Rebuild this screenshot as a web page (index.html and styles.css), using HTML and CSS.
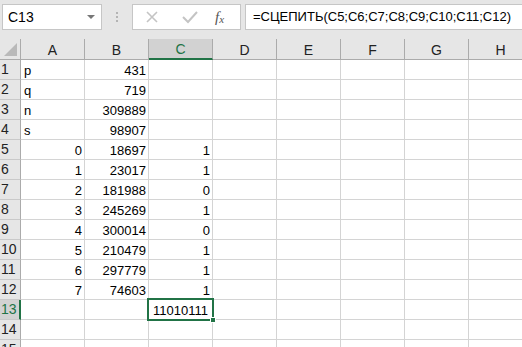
FILE: index.html
```html
<!DOCTYPE html>
<html lang="ru">

<head>
    <meta charset="UTF-8">
    <title>Книга1</title>
    <link rel="stylesheet" href="styles.css">
</head>

<body>
    <div class="formula-bar">
        <div class="name-box">
            <span class="name-text">C13</span>
            <span class="name-arrow"></span>
        </div>
        <div class="grip">
            <i></i><i></i><i></i>
        </div>
        <div class="fx-buttons">
            <svg class="btn-cancel" width="14" height="14" viewBox="0 0 14 14">
                <path d="M2 2 L12 12 M12 2 L2 12" stroke="#c4c4c4" stroke-width="1.6" fill="none" />
            </svg>
            <svg class="btn-enter" width="18" height="14" viewBox="0 0 18 14">
                <path d="M2 7 L7 12 L16 2" stroke="#c4c4c4" stroke-width="2" fill="none" />
            </svg>
            <span class="btn-fx">f<sub>x</sub></span>
        </div>
        <div class="formula-box">=СЦЕПИТЬ(C5;C6;C7;C8;C9;C10;C11;C12)</div>
    </div>

    <div class="sheet">
        <div class="hd corner"><span class="corner-tri"></span></div>
        <div class="hd col">A</div>
        <div class="hd col">B</div>
        <div class="hd col active-col">C</div>
        <div class="hd col">D</div>
        <div class="hd col">E</div>
        <div class="hd col">F</div>
        <div class="hd col">G</div>
        <div class="hd col">H</div>

        <div class="hd row">1</div>
        <div class="c">p</div><div class="c num">431</div><div class="c"></div><div class="c"></div><div class="c"></div><div class="c"></div><div class="c"></div><div class="c"></div>

        <div class="hd row">2</div>
        <div class="c">q</div><div class="c num">719</div><div class="c"></div><div class="c"></div><div class="c"></div><div class="c"></div><div class="c"></div><div class="c"></div>

        <div class="hd row">3</div>
        <div class="c">n</div><div class="c num">309889</div><div class="c"></div><div class="c"></div><div class="c"></div><div class="c"></div><div class="c"></div><div class="c"></div>

        <div class="hd row">4</div>
        <div class="c">s</div><div class="c num">98907</div><div class="c"></div><div class="c"></div><div class="c"></div><div class="c"></div><div class="c"></div><div class="c"></div>

        <div class="hd row">5</div>
        <div class="c num">0</div><div class="c num">18697</div><div class="c num">1</div><div class="c"></div><div class="c"></div><div class="c"></div><div class="c"></div><div class="c"></div>

        <div class="hd row">6</div>
        <div class="c num">1</div><div class="c num">23017</div><div class="c num">1</div><div class="c"></div><div class="c"></div><div class="c"></div><div class="c"></div><div class="c"></div>

        <div class="hd row">7</div>
        <div class="c num">2</div><div class="c num">181988</div><div class="c num">0</div><div class="c"></div><div class="c"></div><div class="c"></div><div class="c"></div><div class="c"></div>

        <div class="hd row">8</div>
        <div class="c num">3</div><div class="c num">245269</div><div class="c num">1</div><div class="c"></div><div class="c"></div><div class="c"></div><div class="c"></div><div class="c"></div>

        <div class="hd row">9</div>
        <div class="c num">4</div><div class="c num">300014</div><div class="c num">0</div><div class="c"></div><div class="c"></div><div class="c"></div><div class="c"></div><div class="c"></div>

        <div class="hd row">10</div>
        <div class="c num">5</div><div class="c num">210479</div><div class="c num">1</div><div class="c"></div><div class="c"></div><div class="c"></div><div class="c"></div><div class="c"></div>

        <div class="hd row">11</div>
        <div class="c num">6</div><div class="c num">297779</div><div class="c num">1</div><div class="c"></div><div class="c"></div><div class="c"></div><div class="c"></div><div class="c"></div>

        <div class="hd row">12</div>
        <div class="c num">7</div><div class="c num">74603</div><div class="c num">1</div><div class="c"></div><div class="c"></div><div class="c"></div><div class="c"></div><div class="c"></div>

        <div class="hd row active-row">13</div>
        <div class="c"></div><div class="c"></div><div class="c selected">11010111<span class="fill-handle"></span></div><div class="c"></div><div class="c"></div><div class="c"></div><div class="c"></div><div class="c"></div>

        <div class="hd row">14</div>
        <div class="c"></div><div class="c"></div><div class="c"></div><div class="c"></div><div class="c"></div><div class="c"></div><div class="c"></div><div class="c"></div>

        <div class="hd row">15</div>
        <div class="c"></div><div class="c"></div><div class="c"></div><div class="c"></div><div class="c"></div><div class="c"></div><div class="c"></div><div class="c"></div>
    </div>
</body>

</html>
```

FILE: styles.css
```css
* {
    margin: 0;
    padding: 0;
    box-sizing: border-box;
}

body {
    width: 522px;
    height: 347px;
    overflow: hidden;
    background: #fff;
    font-family: "Liberation Sans", Arial, sans-serif;
    color: #000;
}

/* строка формул */
.formula-bar {
    height: 39px;
    background: #e6e6e6;
    display: flex;
    align-items: flex-start;
    padding-top: 4px;
    padding-left: 2px;
}

.name-box {
    width: 100px;
    height: 26px;
    background: #fff;
    border: 1px solid #c6c6c6;
    display: flex;
    align-items: center;
    justify-content: space-between;
    padding: 0 6px 0 5px;
}

.name-text {
    font-size: 14px;
}

.name-arrow {
    width: 0;
    height: 0;
    border-left: 4px solid transparent;
    border-right: 4px solid transparent;
    border-top: 4px solid #777;
}

.grip {
    width: 30px;
    height: 26px;
    display: flex;
    flex-direction: column;
    align-items: center;
    justify-content: center;
    gap: 2px;
}

.grip i {
    width: 2px;
    height: 2px;
    background: #b4b4b4;
}

.fx-buttons {
    width: 109px;
    height: 26px;
    background: #fff;
    border: 1px solid #c6c6c6;
    display: flex;
    align-items: center;
    padding-left: 12px;
}

.btn-cancel {
    margin-right: 22px;
}

.btn-enter {
    margin-right: 16px;
}

.btn-fx {
    font-family: "Liberation Serif", "Times New Roman", serif;
    font-style: italic;
    font-size: 15px;
    color: #555;
}

.btn-fx sub {
    font-size: 11px;
    vertical-align: -1px;
}

.formula-box {
    flex: 1;
    margin-left: 4px;
    height: 26px;
    background: #fff;
    border: 1px solid #c6c6c6;
    border-right: none;
    font-size: 13px;
    line-height: 24px;
    padding-left: 7px;
    white-space: nowrap;
}

/* лист */
.sheet {
    display: grid;
    grid-template-columns: 21px repeat(8, 64px);
    grid-auto-rows: 20px;
    grid-template-rows: 21px;
    width: 533px;
    font-size: 13px;
}

.hd {
    background: #e6e6e6;
    color: #222;
    font-size: 14px;
}

.col {
    display: flex;
    align-items: center;
    justify-content: center;
    border-right: 1px solid #ababab;
    border-bottom: 1px solid #ababab;
    padding-top: 1px;
}

.corner {
    position: relative;
    border-right: 1px solid #ababab;
    border-bottom: 1px solid #ababab;
}

.corner-tri {
    position: absolute;
    right: 3px;
    bottom: 3px;
    width: 0;
    height: 0;
    border-left: 13px solid transparent;
    border-bottom: 13px solid #b9b9b9;
}

.active-col {
    background: #d2d2d2;
    color: #217346;
    border-bottom: 2px solid #217346;
}

.row {
    border-right: 1px solid #ababab;
    border-bottom: 1px solid #c9c9c9;
    padding-left: 1px;
    line-height: 19px;
}

.active-row {
    background: #d2d2d2;
    color: #217346;
    border-right: 2px solid #217346;
}

.c {
    border-right: 1px solid #d4d4d4;
    border-bottom: 1px solid #d4d4d4;
    line-height: 19px;
    padding: 1px 2px 0 3px;
    white-space: nowrap;
}

.num {
    text-align: right;
}

.selected {
    position: relative;
    padding-left: 4px;
}

.selected::before {
    content: "";
    position: absolute;
    left: -2px;
    top: -2px;
    right: -2px;
    bottom: -2px;
    border: 2px solid #217346;
}

.fill-handle {
    position: absolute;
    right: -4px;
    bottom: -4px;
    width: 6px;
    height: 6px;
    background: #217346;
    border: 1px solid #fff;
}
```
